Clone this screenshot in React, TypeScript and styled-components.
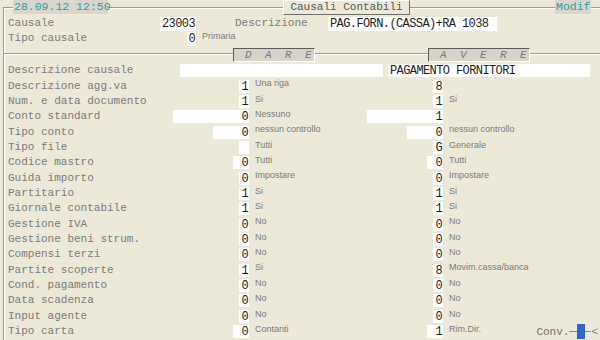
import React from 'react';
import styled, { createGlobalStyle } from 'styled-components';

const Global = createGlobalStyle`
  html, body { margin: 0; padding: 0; background: #ECE9D8; }
  body { width: 600px; height: 340px; overflow: hidden; }
  * { box-sizing: border-box; }
`;

const Screen = styled.div`
  width: 600px;
  height: 340px;
  background: #ECE9D8;
  overflow: hidden;
  padding: 7px 0 0 3px;
  font-family: "Liberation Mono", "Courier New", monospace;
  font-size: 11px;
  color: #7a7a7a;
`;

const Frame = styled.div`
  height: 333px;
  border-top: 1px solid #9d9b8f;
  border-left: 1px solid #9d9b8f;
  box-shadow: inset 1px 1px 0 #ffffff;
`;

const Header = styled.div`
  display: flex;
  align-items: flex-start;
  height: 14px;
  margin-top: -8px;
  margin-bottom: 2px;
`;

const StatusBox = styled.div<{ $ml: number; $w: number }>`
  margin-left: ${p => p.$ml}px;
  width: ${p => p.$w}px;
  height: 14px;
  line-height: 14px;
  background: #d8d6cf;
  color: #2f9c9c;
  font-size: 11.5px;
  padding-left: 1px;
  white-space: nowrap;
`;

const TitleBox = styled.div<{ $ml: number; $w: number }>`
  margin-left: ${p => p.$ml}px;
  width: ${p => p.$w}px;
  height: 15px;
  line-height: 13px;
  background: #ECE9D8;
  border-top: 1px solid #ffffff;
  border-left: 1px solid #ffffff;
  border-right: 1px solid #6f6d66;
  border-bottom: 1px solid #6f6d66;
  color: #555555;
  text-align: center;
  white-space: nowrap;
`;

const Body = styled.div`
  padding-left: 4px;
`;

const TopRow = styled.div<{ $cols: string }>`
  display: grid;
  grid-template-columns: ${p => p.$cols};
  align-items: center;
  height: 15px;
`;

const Label = styled.div`
  white-space: nowrap;
  line-height: 15px;
`;

const Cell = styled.div`
  display: flex;
  justify-content: flex-end;
  align-items: center;
`;

const Field = styled.div<{ $w?: number; $h?: number; $left?: boolean }>`
  width: ${p => (p.$w ? `${p.$w}px` : '100%')};
  height: ${p => p.$h ?? 13}px;
  line-height: ${p => (p.$h ?? 13) + 1}px;
  background: #ffffff;
  color: #1c1c1c;
  font-size: 12px;
  letter-spacing: -0.6px;
  text-align: ${p => (p.$left ? 'left' : 'right')};
  padding: ${p => (p.$left ? '0 0 0 2px' : '0 1px 0 0')};
  white-space: nowrap;
  overflow: hidden;
`;

const Hint = styled.div`
  align-self: start;
  padding-left: 6px;
  font-family: "Liberation Sans", Arial, sans-serif;
  font-size: 9px;
  line-height: 10px;
  color: #7a7a7a;
  white-space: nowrap;
`;

const SepRow = styled.div`
  display: flex;
  align-items: center;
  height: 17px;
  margin-left: -4px;
  background:
    linear-gradient(#a09e93, #a09e93) 0 7px / 100% 1px no-repeat,
    linear-gradient(#ffffff, #ffffff) 0 8px / 100% 1px no-repeat;
`;

const Tab = styled.div<{ $ml: number; $w: number }>`
  margin-left: ${p => p.$ml}px;
  width: ${p => p.$w}px;
  height: 14px;
  display: flex;
  align-items: center;
  gap: 13.4px;
  background: #d6d3cb;
  border-top: 1px solid #5d5b55;
  border-left: 1px solid #5d5b55;
  border-right: 1px solid #ffffff;
  border-bottom: 1px solid #ffffff;
  padding-left: 11px;
  font-style: italic;
  color: #777777;
`;

const Letter = styled.span`
  line-height: 12px;
`;

const Row = styled.div<{ $cols?: string }>`
  display: grid;
  grid-template-columns: ${p => p.$cols ?? '165px 76px 118px 76px 1fr'};
  align-items: center;
  height: 15.35px;
`;

const Tail = styled.div`
  display: flex;
  align-items: start;
`;

const Conv = styled.div`
  margin-left: auto;
  display: flex;
  align-items: center;
  height: 15px;
  color: #6f6f6f;
`;

const Wire = styled.span<{ $w: number }>`
  display: inline-block;
  width: ${p => p.$w}px;
  height: 1px;
  background: #8a8a8a;
`;

const Cursor = styled.span`
  display: inline-block;
  width: 8px;
  height: 15px;
  background: #3266c8;
`;

const Arrow = styled.span`
  color: #7a7a7a;
  margin-right: 2px;
`;

type Side = { v: string; w: number; hint?: string };
type Line = { label: string; dare: Side; avere: Side };

const rows: Line[] = [
  { label: 'Descrizione agg.va', dare: { v: '1', w: 10, hint: 'Una riga' }, avere: { v: '8', w: 10 } },
  { label: 'Num. e data documento', dare: { v: '1', w: 10, hint: 'Si' }, avere: { v: '1', w: 10, hint: 'Si' } },
  { label: 'Conto standard', dare: { v: '0', w: 76, hint: 'Nessuno' }, avere: { v: '1', w: 76 } },
  { label: 'Tipo conto', dare: { v: '0', w: 36, hint: 'nessun controllo' }, avere: { v: '0', w: 36, hint: 'nessun controllo' } },
  { label: 'Tipo file', dare: { v: '', w: 10, hint: 'Tutti' }, avere: { v: 'G', w: 10, hint: 'Generale' } },
  { label: 'Codice mastro', dare: { v: '0', w: 16, hint: 'Tutti' }, avere: { v: '0', w: 16, hint: 'Tutti' } },
  { label: 'Guida importo', dare: { v: '0', w: 10, hint: 'Impostare' }, avere: { v: '0', w: 10, hint: 'Impostare' } },
  { label: 'Partitario', dare: { v: '1', w: 10, hint: 'Si' }, avere: { v: '1', w: 10, hint: 'Si' } },
  { label: 'Giornale contabile', dare: { v: '1', w: 10, hint: 'Si' }, avere: { v: '1', w: 10, hint: 'Si' } },
  { label: 'Gestione IVA', dare: { v: '0', w: 10, hint: 'No' }, avere: { v: '0', w: 10, hint: 'No' } },
  { label: 'Gestione beni strum.', dare: { v: '0', w: 10, hint: 'No' }, avere: { v: '0', w: 10, hint: 'No' } },
  { label: 'Compensi terzi', dare: { v: '0', w: 10, hint: 'No' }, avere: { v: '0', w: 10, hint: 'No' } },
  { label: 'Partite scoperte', dare: { v: '1', w: 10, hint: 'Si' }, avere: { v: '8', w: 10, hint: 'Movim.cassa/banca' } },
  { label: 'Cond. pagamento', dare: { v: '0', w: 10, hint: 'No' }, avere: { v: '0', w: 10, hint: 'No' } },
  { label: 'Data scadenza', dare: { v: '0', w: 10, hint: 'No' }, avere: { v: '0', w: 10, hint: 'No' } },
  { label: 'Input agente', dare: { v: '0', w: 10, hint: 'No' }, avere: { v: '0', w: 10, hint: 'No' } },
];

export default function App() {
  return (
    <Screen>
      <Global />
      <Frame>
        <Header>
          <StatusBox $ml={9} $w={95}>28.09.12 12:50</StatusBox>
          <TitleBox $ml={175} $w={127}>Causali Contabili</TitleBox>
          <StatusBox $ml={145} $w={36}>Modif</StatusBox>
        </Header>
        <Body>
          <TopRow $cols="152px 36px 39px 93px 169px">
            <Label>Causale</Label>
            <Field $h={14}>23003</Field>
            <span />
            <Label>Descrizione</Label>
            <Field $h={14} $left>PAG.FORN.(CASSA)+RA 1038</Field>
          </TopRow>
          <TopRow $cols="152px 36px 1fr">
            <Label>Tipo causale</Label>
            <Cell><Field $w={9} $h={14}>0</Field></Cell>
            <Hint>Primaria</Hint>
          </TopRow>
          <SepRow>
            <Tab $ml={229} $w={82}>
              {'DARE'.split('').map((c, i) => <Letter key={i}>{c}</Letter>)}
            </Tab>
            <Tab $ml={113} $w={102}>
              {'AVERE'.split('').map((c, i) => <Letter key={i}>{c}</Letter>)}
            </Tab>
          </SepRow>
          <Row $cols="172px 203px 5px 202px">
            <Label>Descrizione causale</Label>
            <Field $left />
            <span />
            <Field $left>PAGAMENTO FORNITORI</Field>
          </Row>
          {rows.map(r => (
            <Row key={r.label}>
              <Label>{r.label}</Label>
              <Cell><Field $w={r.dare.w}>{r.dare.v}</Field></Cell>
              <Hint>{r.dare.hint ?? ''}</Hint>
              <Cell><Field $w={r.avere.w}>{r.avere.v}</Field></Cell>
              <Hint>{r.avere.hint ?? ''}</Hint>
            </Row>
          ))}
          <Row>
            <Label>Tipo carta</Label>
            <Cell><Field $w={16}>0</Field></Cell>
            <Hint>Contanti</Hint>
            <Cell><Field $w={16}>1</Field></Cell>
            <Tail>
              <Hint>Rim.Dir.</Hint>
              <Conv>
                Conv.
                <Wire $w={8} />
                <Cursor />
                <Wire $w={6} />
                <Arrow>&lt;</Arrow>
              </Conv>
            </Tail>
          </Row>
        </Body>
      </Frame>
    </Screen>
  );
}
